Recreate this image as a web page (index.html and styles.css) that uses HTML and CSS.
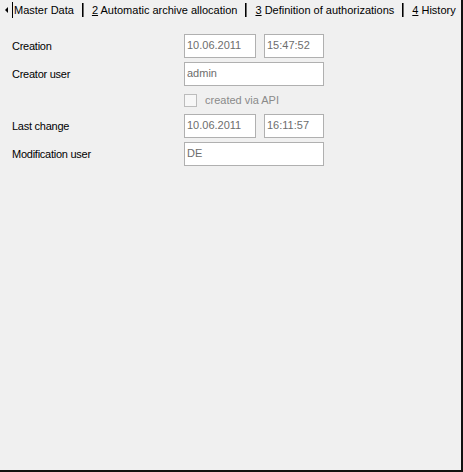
FILE: index.html
```html
<!DOCTYPE html>
<html lang="en">

<head>
    <meta charset="UTF-8">
    <title>Master Data</title>
    <link rel="stylesheet" href="styles.css">
</head>

<body>
    <div class="window">
        <div class="tab-strip">
            <div class="tab-scroll"><span class="arrow-left"></span></div>
            <div class="tab">Master Data</div>
            <div class="tab-sep"></div>
            <div class="tab"><u>2</u> Automatic archive allocation</div>
            <div class="tab-sep"></div>
            <div class="tab"><u>3</u> Definition of authorizations</div>
            <div class="tab-sep"></div>
            <div class="tab"><u>4</u> History</div>
        </div>

        <div class="form">
            <div class="label">Creation</div>
            <div class="pair">
                <div class="field field-date">10.06.2011</div>
                <div class="field field-time">15:47:52</div>
            </div>

            <div class="label">Creator user</div>
            <div class="field field-wide">admin</div>

            <div></div>
            <div class="check-row">
                <span class="checkbox"></span>
                <span class="check-label">created via API</span>
            </div>

            <div class="label">Last change</div>
            <div class="pair">
                <div class="field field-date">10.06.2011</div>
                <div class="field field-time">16:11:57</div>
            </div>

            <div class="label">Modification user</div>
            <div class="field field-wide">DE</div>
        </div>
    </div>
</body>

</html>
```

FILE: styles.css
```css
html,
body {
    margin: 0;
    padding: 0;
    background-color: #f0f0f0;
}

body {
    font-family: "Liberation Sans", Arial, sans-serif;
    font-size: 11px;
    color: #000000;
}

.window {
    width: 463px;
    height: 472px;
    box-sizing: border-box;
    border-right: 2px solid #111111;
    border-bottom: 2px solid #111111;
    background-color: #f0f0f0;
}

/* tab strip */
.tab-strip {
    display: flex;
    align-items: center;
    height: 20px;
    overflow: hidden;
}

.tab-strip > * {
    flex-shrink: 0;
}

.tab-scroll {
    width: 12px;
    height: 16px;
    border-right: 1px solid #000000;
    display: flex;
    align-items: center;
    justify-content: center;
}

.arrow-left {
    width: 0;
    height: 0;
    border-top: 3px solid transparent;
    border-bottom: 3px solid transparent;
    border-right: 3px solid #000000;
}

.tab {
    padding: 0 8px 0 1px;
    line-height: 18px;
    white-space: nowrap;
}

.tab-sep {
    width: 1px;
    height: 14px;
    background-color: #000000;
    border-right: 1px solid #6a6a6a;
    margin-right: 7px;
}

/* form */
.form {
    display: grid;
    grid-template-columns: 172px 140px;
    grid-template-rows: 24px 24px 20px 24px 24px;
    row-gap: 4px;
    padding: 14px 0 0 12px;
}

.label {
    line-height: 24px;
    letter-spacing: -0.25px;
}

.pair {
    display: flex;
    gap: 8px;
}

.field {
    height: 24px;
    box-sizing: border-box;
    border: 1px solid #b0b0b0;
    background-color: #ffffff;
    color: #6d6d6d;
    font-size: 11px;
    line-height: 14px;
    padding: 3px 2px 0 2px;
    white-space: nowrap;
    overflow: hidden;
}

.field-date {
    width: 72px;
}

.field-time {
    width: 60px;
}

.field-wide {
    width: 140px;
}

.check-row {
    display: flex;
    align-items: center;
    gap: 8px;
}

.checkbox {
    width: 13px;
    height: 13px;
    box-sizing: border-box;
    border: 1px solid #bcbcbc;
    background-color: #f7f7f7;
}

.check-label {
    color: #8a8a8a;
    font-size: 11px;
}
```
